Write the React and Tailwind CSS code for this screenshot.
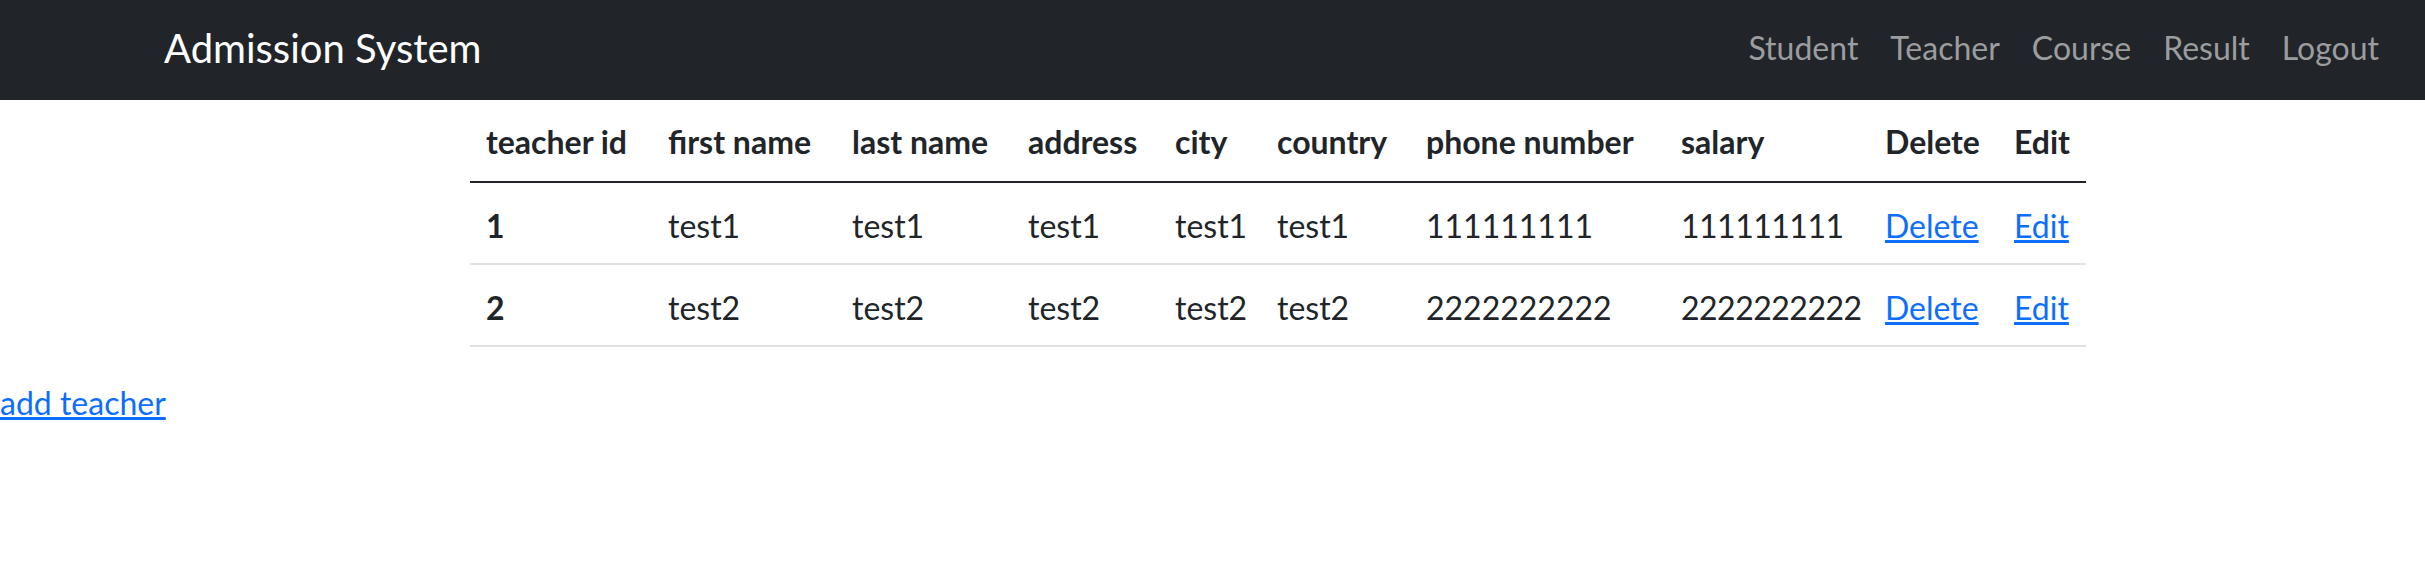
const teachers = [
  { id: 1, first: "test1", last: "test1", address: "test1", city: "test1", country: "test1", phone: "111111111", salary: "111111111" },
  { id: 2, first: "test2", last: "test2", address: "test2", city: "test2", country: "test2", phone: "2222222222", salary: "2222222222" },
];

const columns = [
  { label: "teacher id", width: "w-[182px]" },
  { label: "first name", width: "w-[184px]" },
  { label: "last name", width: "w-[176px]" },
  { label: "address", width: "w-[147px]" },
  { label: "city", width: "w-[102px]" },
  { label: "country", width: "w-[149px]" },
  { label: "phone number", width: "w-[255px]" },
  { label: "salary", width: "w-[204px]" },
  { label: "Delete", width: "w-[129px]" },
  { label: "Edit", width: "w-[88px]" },
];

const links = ["Student", "Teacher", "Course", "Result", "Logout"];

export default function App() {
  return (
    <div
      className="min-h-[575px] bg-white text-[#212529]"
      style={{ fontFamily: '"Segoe UI", Lato, "Liberation Sans", sans-serif' }}
    >
      <nav className="flex h-[100px] items-center justify-between bg-[#212529] pb-[5px] pl-[164px] pr-[30px]">
        <a href="#" className="text-[40px] leading-[60px] text-white">
          Admission System
        </a>
        <ul className="flex items-center">
          {links.map((l) => (
            <li key={l}>
              <a href="#" className="block px-4 text-[32px] leading-[48px] text-[#9b9d9f]">
                {l}
              </a>
            </li>
          ))}
        </ul>
      </nav>

      <table className="ml-[470px] mb-[32px] w-[1616px] table-fixed border-collapse text-[32px] leading-[48px]">
        <thead>
          <tr className="border-b-2 border-[#212529]">
            {columns.map((c) => (
              <th key={c.label} className={`${c.width} px-4 pt-[18px] pb-[15px] text-left font-bold whitespace-nowrap`}>
                {c.label}
              </th>
            ))}
          </tr>
        </thead>
        <tbody>
          {teachers.map((t) => (
            <tr key={t.id} className="border-b-2 border-[#dee2e6]">
              <th className="px-4 pt-[19px] pb-[13px] text-left font-bold">{t.id}</th>
              <td className="px-4 pt-[19px] pb-[13px] whitespace-nowrap">{t.first}</td>
              <td className="px-4 pt-[19px] pb-[13px] whitespace-nowrap">{t.last}</td>
              <td className="px-4 pt-[19px] pb-[13px] whitespace-nowrap">{t.address}</td>
              <td className="px-4 pt-[19px] pb-[13px] whitespace-nowrap">{t.city}</td>
              <td className="px-4 pt-[19px] pb-[13px] whitespace-nowrap">{t.country}</td>
              <td className="px-4 pt-[19px] pb-[13px] whitespace-nowrap">{t.phone}</td>
              <td className="px-4 pt-[19px] pb-[13px] whitespace-nowrap tracking-[-0.5px]">{t.salary}</td>
              <td className="px-4 pt-[19px] pb-[13px]">
                <a href="#" className="text-[#0d6efd] underline">Delete</a>
              </td>
              <td className="px-4 pt-[19px] pb-[13px]">
                <a href="#" className="text-[#0d6efd] underline">Edit</a>
              </td>
            </tr>
          ))}
        </tbody>
      </table>

      <a href="#" className="text-[32px] leading-[48px] text-[#0d6efd] underline">
        add teacher
      </a>
    </div>
  );
}
